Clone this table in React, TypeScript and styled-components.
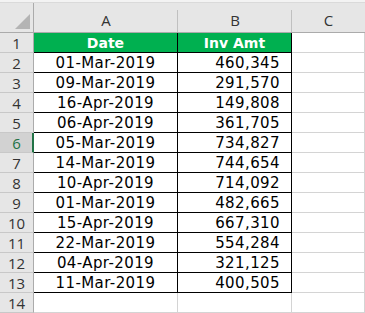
import styled, { createGlobalStyle } from 'styled-components';

const rows: [string, string][] = [
  ['01-Mar-2019', '460,345'],
  ['09-Mar-2019', '291,570'],
  ['16-Apr-2019', '149,808'],
  ['06-Apr-2019', '361,705'],
  ['05-Mar-2019', '734,827'],
  ['14-Mar-2019', '744,654'],
  ['10-Apr-2019', '714,092'],
  ['01-Mar-2019', '482,665'],
  ['15-Apr-2019', '667,310'],
  ['22-Mar-2019', '554,284'],
  ['04-Apr-2019', '321,125'],
  ['11-Mar-2019', '400,505']
];

const GlobalStyle = createGlobalStyle`
  body {
    margin: 0;
    background: #ffffff;
    overflow: hidden;
  }
`;

const App = () => {
  const activeRow = 6;

  return (
    <>
      <GlobalStyle />
      <Sheet>
        <TopStrip />
        <Grid>
          <Corner>
            <CornerTriangle />
          </Corner>
          <ColHeader>A</ColHeader>
          <ColHeader>B</ColHeader>
          <ColHeader $last>C</ColHeader>

          <RowHeader $active={activeRow === 1}>1</RowHeader>
          <TitleCell>Date</TitleCell>
          <TitleCell>Inv Amt</TitleCell>
          <EmptyCell />

          {rows.map(([date, amt], i) => {
            const n = i + 2;
            return [
              <RowHeader key={`h${n}`} $active={activeRow === n}>
                {n}
              </RowHeader>,
              <DataCell key={`a${n}`} $align='center'>
                {date}
              </DataCell>,
              <DataCell key={`b${n}`} $align='right'>
                {amt}
              </DataCell>,
              <EmptyCell key={`c${n}`} />
            ];
          })}

          <RowHeader>14</RowHeader>
          <EmptyCell />
          <EmptyCell />
          <EmptyCell />
        </Grid>
      </Sheet>
    </>
  );
};

export default App;

const Sheet = styled.div`
  width: 365px;
  height: 313px;
  overflow: hidden;
  background: #ffffff;
`;

const TopStrip = styled.div`
  height: 3px;
  background: #f3f3f3;
  border-bottom: 1px solid #dadada;
  box-sizing: border-box;
`;

const Grid = styled.div`
  display: grid;
  grid-template-columns: 34px 144px 114px 1fr;
  grid-auto-rows: 20px;
  grid-template-rows: 30px;
`;

const Corner = styled.div`
  position: relative;
  background: #e6e6e6;
  border-bottom: 1px solid #ababab;
  border-right: 1px solid #ababab;
  box-sizing: border-box;
`;

const CornerTriangle = styled.div`
  position: absolute;
  right: 3px;
  bottom: 3px;
  width: 0;
  height: 0;
  border-left: 15px solid transparent;
  border-bottom: 15px solid #b4b4b4;
`;

const ColHeader = styled.div<{ $last?: boolean }>`
  display: flex;
  align-items: flex-end;
  justify-content: center;
  padding-bottom: 2px;
  box-sizing: border-box;
  font-family: 'Open Sans', 'Noto Sans', sans-serif;
  font-size: 15px;
  color: #333333;
  background: ${(p) =>
    p.$last
      ? '#e6e6e6'
      : 'linear-gradient(#c0c0c0, #c0c0c0) right bottom / 1px 22px no-repeat, #e6e6e6'};
  border-bottom: 1px solid #ababab;
`;

const RowHeader = styled.div<{ $active?: boolean }>`
  display: flex;
  align-items: center;
  justify-content: center;
  box-sizing: border-box;
  font-family: 'Open Sans', 'Noto Sans', sans-serif;
  font-size: 15px;
  color: ${(p) => (p.$active ? '#217346' : '#333333')};
  background: ${(p) => (p.$active ? '#d2d2d2' : '#e6e6e6')};
  border-bottom: 1px solid #c8c8c8;
  border-right: ${(p) => (p.$active ? '2px solid #217346' : '1px solid #ababab')};
  padding-left: ${(p) => (p.$active ? '1px' : '0')};
`;

const TitleCell = styled.div`
  display: flex;
  align-items: center;
  justify-content: center;
  box-sizing: border-box;
  background: #00b050;
  color: #ffffff;
  font-family: 'DejaVu Sans', Verdana, sans-serif;
  font-weight: bold;
  font-size: 14px;
  border-right: 1px solid #000000;
  border-bottom: 1px solid #000000;
`;

const DataCell = styled.div<{ $align: 'center' | 'right' }>`
  display: flex;
  align-items: center;
  justify-content: ${(p) => (p.$align === 'center' ? 'center' : 'flex-end')};
  padding-right: ${(p) => (p.$align === 'right' ? '11px' : '0')};
  padding-top: 1px;
  box-sizing: border-box;
  font-family: 'DejaVu Sans', Verdana, sans-serif;
  font-size: 15px;
  letter-spacing: 0.4px;
  color: #000000;
  border-right: 1px solid #000000;
  border-bottom: 1px solid #000000;
`;

const EmptyCell = styled.div`
  box-sizing: border-box;
  border-right: 1px solid #d4d4d4;
  border-bottom: 1px solid #d4d4d4;
`;
